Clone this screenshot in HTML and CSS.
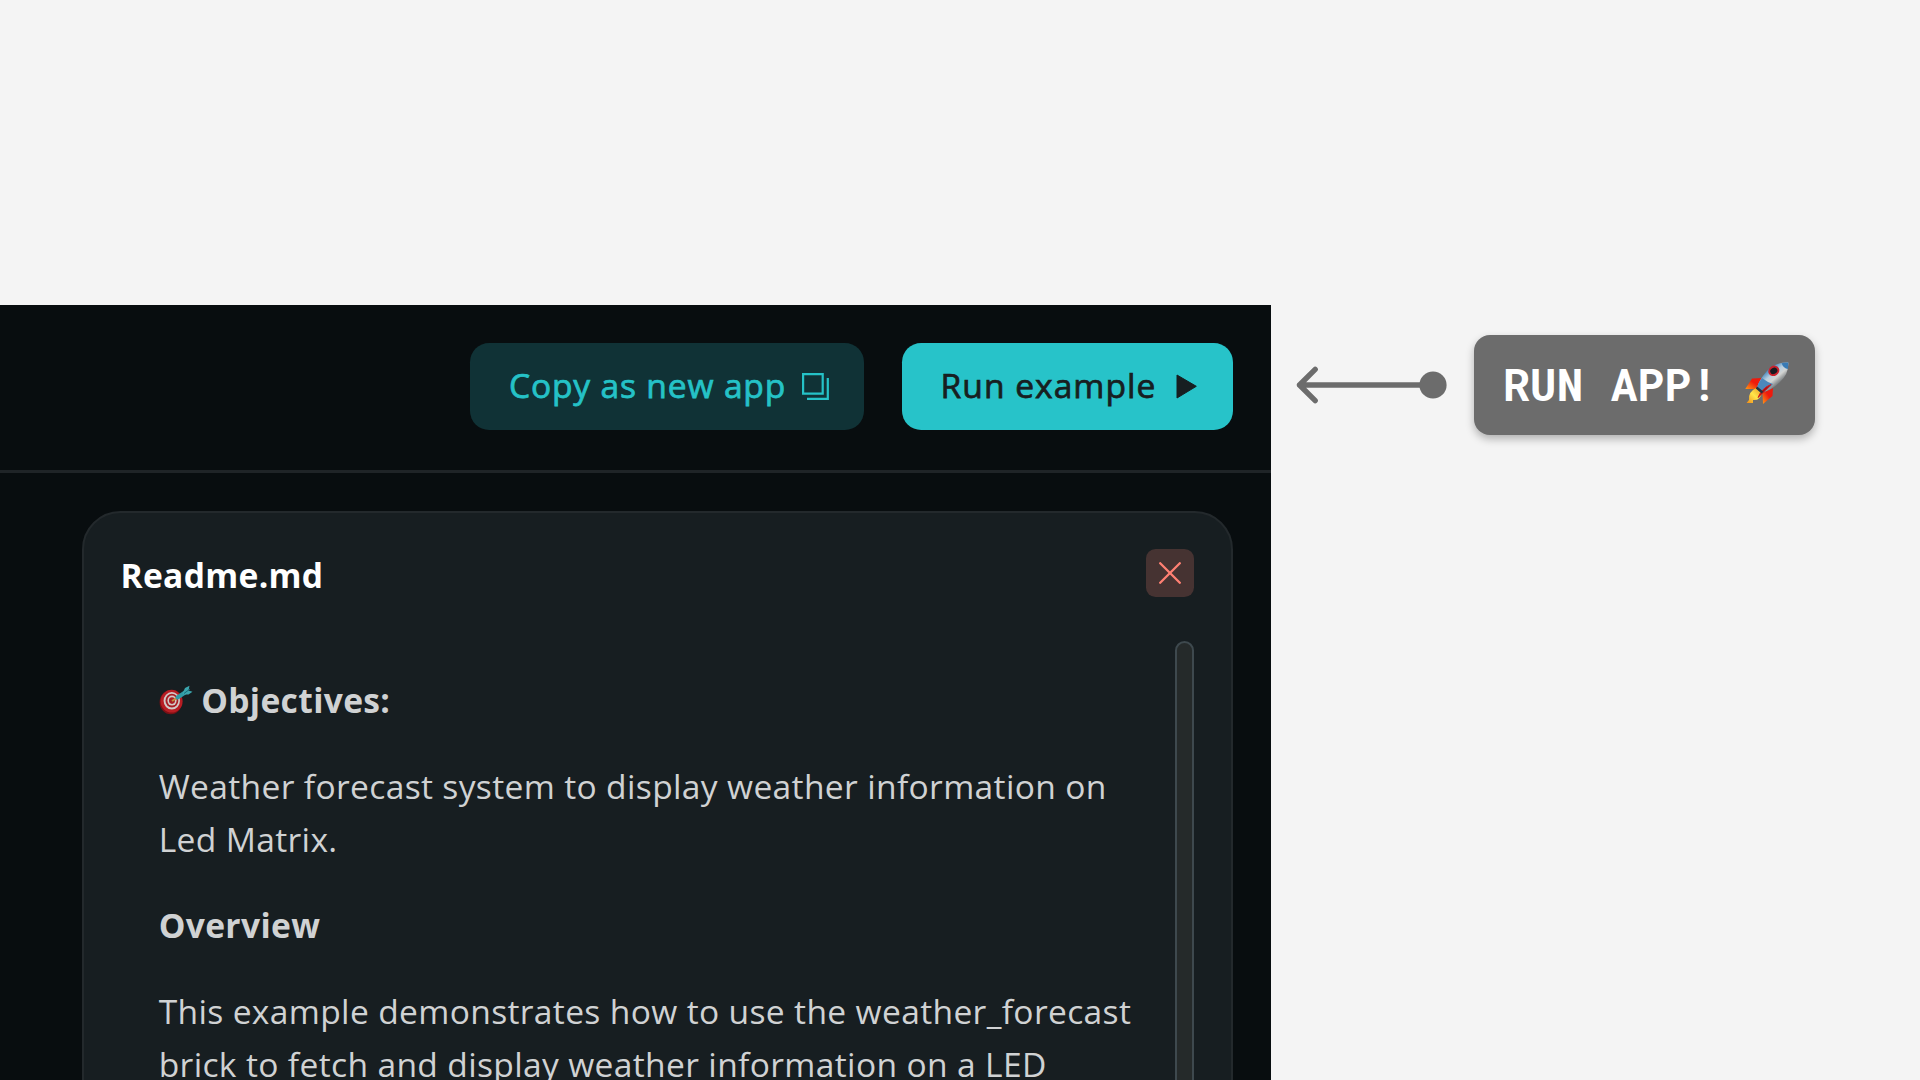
FILE: index.html
```html
<!DOCTYPE html>
<html lang="en">
<head>
<meta charset="utf-8">
<title>Run example</title>
<link rel="stylesheet" href="styles.css">
</head>
<body>
<main class="stage">
  <section class="app">
    <header class="toolbar">
      <button class="btn btn-copy"><span>Copy as new app</span>
        <svg class="copy-icon" viewBox="0 0 27 27"><path d="M1.1 1.1H20.7V20.7H1.1ZM25.8 5V25.8H5" fill="none" stroke="currentColor" stroke-width="2.2"/></svg>
      </button>
      <button class="btn btn-run"><span>Run example</span>
        <svg class="play-icon" viewBox="0 0 21 25"><path d="M1 1L20.3 12.3L1 24Z" fill="currentColor" stroke="currentColor" stroke-width="1" stroke-linejoin="round"/></svg>
      </button>
    </header>
    <article class="card">
      <div class="card-head">
        <h1 class="card-title">Readme.md</h1>
        <button class="close" aria-label="Close"><svg class="close-icon" viewBox="0 0 22 22"><path d="M1.2 1.2L20.8 20.8M20.8 1.2L1.2 20.8" stroke="currentColor" stroke-width="2.3" stroke-linecap="round"/></svg></button>
      </div>
      <div class="card-body">
        <div class="readme">
          <h2 class="heading"><svg class="target" viewBox="0 0 34 30">
            <ellipse cx="11.8" cy="17.2" rx="11.2" ry="12" fill="#7c1015"/>
            <ellipse cx="12.6" cy="16.2" rx="11" ry="11.4" fill="#b71d23"/>
            <ellipse cx="12.8" cy="15.8" rx="8.2" ry="8.7" fill="#d2c9c7"/>
            <ellipse cx="12.9" cy="15.7" rx="6.4" ry="6.9" fill="#a91d24"/>
            <ellipse cx="13" cy="15.6" rx="4.6" ry="5" fill="#d2c9c7"/>
            <ellipse cx="13" cy="15.6" rx="3" ry="3.3" fill="#a91d24"/>
            <path d="M13 16L18.5 12.5" stroke="#c2913d" stroke-width="2"/>
            <path d="M18.5 12.5L26 7.5" stroke="#2f9aa5" stroke-width="4" stroke-linecap="round"/>
            <path d="M23.5 8.5L26 3L30.5 .8L29.5 5.5L33.5 6.8L29.5 9.5L25 9.5Z" fill="#3ba5ad"/>
            <path d="M25 8.5L31 4" stroke="#176a78" stroke-width="1"/>
          </svg><span>Objectives:</span></h2>
          <p class="para">Weather forecast system to display weather information on Led Matrix.</p>
          <h2 class="heading">Overview</h2>
          <p class="para">This example demonstrates how to use the weather_forecast brick to fetch and display weather information on a LED</p>
        </div>
        <div class="scrollbar"></div>
      </div>
    </article>
  </section>
  <aside class="note">
    <svg class="arrow" viewBox="0 0 152 36"><g stroke="#6c6c6c" stroke-width="5.4" fill="none" stroke-linecap="round" stroke-linejoin="round"><path d="M4.5 18H137M20.2 2.3L4.5 18L20.2 33.7"/></g><circle cx="138" cy="18" r="13.6" fill="#6c6c6c"/></svg>
    <div class="callout">
      <span class="callout-label">RUN APP!</span>
      <svg class="rocket" viewBox="0 0 44 42">
        <defs>
          <linearGradient id="hull" x1=".2" y1=".1" x2=".8" y2=".8"><stop offset=".2" stop-color="#3b7fb8"/><stop offset=".45" stop-color="#b9cfdf"/><stop offset=".62" stop-color="#d3d4d2"/><stop offset=".78" stop-color="#8f9394"/><stop offset="1" stop-color="#3d4348"/></linearGradient>
          <linearGradient id="flame" x1="1" y1="0" x2="0" y2="1"><stop offset="0" stop-color="#e89420"/><stop offset=".5" stop-color="#ffe64a"/><stop offset="1" stop-color="#f08a16"/></linearGradient>
          <linearGradient id="fin" x1="1" y1="0" x2="0" y2="1"><stop offset=".45" stop-color="#ee1a0c"/><stop offset="1" stop-color="#ff9a16"/></linearGradient>
        </defs>
        <path d="M17 16L7 16.5L.3 27L12 27Z" fill="url(#fin)"/>
        <path d="M28 26L27.5 34L18 42L17.5 31Z" fill="url(#fin)"/>
        <path d="M11 26L17 31Q15 39 8 38L8 41L1.5 41L4 38Q3 30 11 26Z" fill="url(#flame)"/>
        <path d="M43.3.5Q30 0 21.5 9.5Q14 18 12 26L17 30.5Q27 28 35 20Q43.8 12 43.3.5Z" fill="url(#hull)"/>
        <path d="M17 16Q22 20 28 22Q24 27 16 31L11.5 26.5Q13 21 17 16Z" fill="#4c88bc"/>
        <path d="M36.5 1.2Q38.5 6.5 43 7L43.3.5Q39.8.1 36.5 1.2Z" fill="#397bb5"/>
        <path d="M26 22.5Q21 28 13 35.5Q17 26 26 22.5Z" fill="#a50f14" stroke="#d31a1a" stroke-width="1"/>
        <path d="M11.5 25.5L17.5 30.5" stroke="#26313a" stroke-width="2.3"/>
        <ellipse cx="28.8" cy="8.8" rx="4.7" ry="4" transform="rotate(-30 28.8 8.8)" fill="#161a20" stroke="#c9222c" stroke-width="2"/>
      </svg>
    </div>
  </aside>
</main>
</body>
</html>
```
FILE: styles.css
```css
* { box-sizing: border-box; }
body { margin: 0; background: #f4f4f4; font-family: "Open Sans", sans-serif; }
.stage { display: flex; width: 1920px; height: 1080px; padding-top: 305px; overflow: hidden; align-items: flex-start; }
.app { width: 1271px; height: 775px; flex: none; background: #080d0f; overflow: hidden; }
.toolbar { display: flex; justify-content: flex-end; gap: 38.4px; height: 168px; padding: 38.4px 38px 0 0; border-bottom: 3px solid #1f2427; }
.btn { display: flex; align-items: center; height: 86.4px; border: 0; border-radius: 19.2px; padding: 0 34.8px 2px 38.6px; font: 500 33.6px/52.8px "Open Sans", sans-serif; letter-spacing: .83px; white-space: nowrap; -webkit-text-stroke: .75px currentColor; }
.btn-copy { width: 393.3px; justify-content: space-between; background: #103236; color: #25c2c7; }
.btn-run { width: 331px; justify-content: space-between; padding-right: 36px; background: #27c3c9; color: #171e21; letter-spacing: 1px; }
.copy-icon { width: 27px; height: 27px; margin-top: 1px; }
.play-icon { width: 21px; height: 25px; margin-top: 1px; }
.card { display: flex; flex-direction: column; width: 1151px; height: 620px; margin: 38px 0 0 82px; border: 2px solid #23292c; border-radius: 38.4px; background: #171e21; padding: 36px 36.8px 0 36.5px; }
.card-head { display: flex; justify-content: space-between; height: 91.5px; flex: none; }
.card-title { margin: 0; font-weight: 700; font-size: 33.6px; line-height: 52.8px; color: #fff; letter-spacing: .3px; }
.close { display: flex; align-items: center; justify-content: center; width: 48px; height: 48px; border: 0; padding: 0; margin-top: .4px; border-radius: 9.6px; background: #463332; color: #ff8073; }
.close-icon { width: 22px; height: 22px; }
.card-body { display: flex; flex: 1; justify-content: space-between; min-height: 0; }
.readme { display: flex; flex-direction: column; gap: 33.6px; width: 1030px; padding: 33px 0 0 38.2px; font-size: 33.6px; line-height: 52.8px; color: #d0d2d3; letter-spacing: .34px; }
.heading { display: flex; align-items: center; gap: 8.5px; margin: 0; font-size: inherit; font-weight: 700; color: #d0d2d3; }
.target { width: 34px; height: 30px; }
.para { margin: 0; }
.scrollbar { width: 19px; height: 600px; flex: none; border: 2px solid #3e494e; border-radius: 9.6px; background: #252a2a; }
.note { display: flex; align-items: center; height: 100px; margin: 30px 0 0 24px; }
.arrow { width: 152px; height: 36px; overflow: visible; flex: none; }
.callout { display: flex; align-items: center; width: 341px; height: 100px; margin-left: 27px; border-radius: 16px; background: #6c6c6c; box-shadow: 0 4px 8px rgba(0, 0, 0, .28); padding-left: 29px; }
.callout-label { width: 217px; flex: none; margin-bottom: 2px; font: 700 44.6px/60px "Roboto Mono", "Roboto", sans-serif; letter-spacing: .1px; color: #fff; white-space: pre; }
.rocket { width: 44px; height: 42px; flex: none; margin: 0 0 4px 25px; }
```
